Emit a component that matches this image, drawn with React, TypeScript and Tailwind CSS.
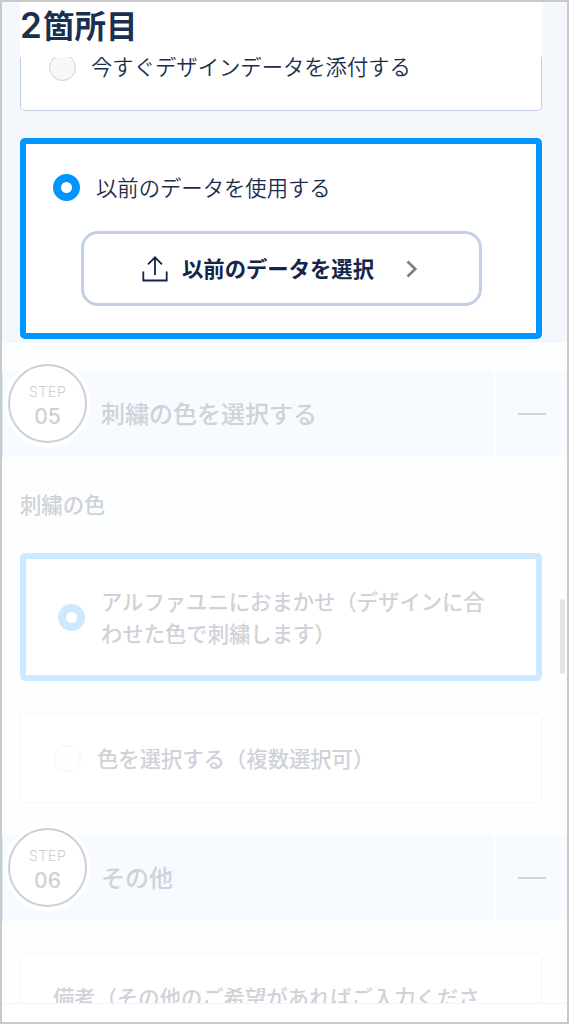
import type { ReactNode } from "react";

function Radio({ checked = false, faded = false }: { checked?: boolean; faded?: boolean }) {
  if (checked) {
    return (
      <span
        className={`block size-[27px] shrink-0 rounded-full border-[8.5px] bg-white ${
          faded ? "border-[#cce9ff]" : "border-[#0095ff]"
        }`}
      />
    );
  }
  return (
    <span
      className={`block size-[27px] shrink-0 rounded-full border ${
        faded ? "border-[#f3f5fb] bg-[#fefefe]" : "border-[#c3d0e7] bg-[#f8f8f8]"
      }`}
    />
  );
}

function UploadIcon() {
  return (
    <svg width="26" height="26" viewBox="0 0 26 26" fill="none" stroke="#14254a" strokeWidth="1.8">
      <path d="M1.3 15.5v9h23.4v-9" />
      <path d="M13 19V1.5M6 8.3l7-7 7 7" />
    </svg>
  );
}

function StepHeader({ step, title }: { step: string; title: string }) {
  return (
    <div className="flex h-[86px] shrink-0 gap-[2px]">
      <div className="flex w-[492px] border-l border-[#dcecf9] bg-[#f7fafe]">
        <div className="-mt-[11px] ml-[1px] flex size-[87px] shrink-0 items-center justify-center rounded-full bg-white">
          <div className="flex size-[79px] flex-col items-center rounded-full border-2 border-[#cdd0d8] pt-[17px] text-[#cdd0d8]">
            <span className="font-['Inter'] text-[14.5px] leading-[18px] font-light tracking-[0.3px]">STEP</span>
            <span className="mt-[3px] font-['Inter'] text-[21px] leading-[26px] font-medium">{step}</span>
          </div>
        </div>
        <h2 className="ml-[10px] text-[24px] leading-[84px] font-medium text-[#cfd2d9]">{title}</h2>
      </div>
      <div className="flex flex-1 items-center justify-center bg-[#f7fafe]">
        <span className="mr-[-1px] block h-[2px] w-[28px] bg-[#d2d4d9]" />
      </div>
    </div>
  );
}

function FadedCard({ className, children }: { className: string; children: ReactNode }) {
  return (
    <div className={`flex shrink-0 bg-white text-[21.33px] leading-[32px] font-medium text-[#cfd2d9] ${className}`}>
      {children}
    </div>
  );
}

export default function App() {
  return (
    <div className="relative flex h-[1024px] w-[569px] flex-col overflow-hidden border-2 border-[#c9c9c9] bg-[#fdfefe] font-['Noto_Sans_CJK_JP',sans-serif] whitespace-nowrap">
      <section className="flex h-[341px] shrink-0 flex-col bg-[#f4f8fc] pr-[25px] pl-[18px] text-[#1d2d4e]">
        <h1 className="flex h-[55px] shrink-0 bg-white text-[31.5px] leading-[44px] font-bold text-[#1b2f4f]">
          <span className="w-[23px] font-['Inter'] text-[35px] leading-[47px] font-semibold">2</span>
          箇所目
        </h1>
        <div className="flex h-[54px] shrink-0 items-start overflow-hidden rounded-b-[5px] border border-t-0 border-[#c3d0e7] bg-white pl-[28px]">
          <span className="-mt-[3px]">
            <Radio />
          </span>
          <span className="-mt-[7px] ml-[15px] text-[21.33px] leading-[32px] font-[350]">今すぐデザインデータを添付する</span>
        </div>
        <div className="mt-[27px] h-[201px] shrink-0 rounded-[5px] border-6 border-[#0095ff] bg-white">
          <div className="mt-[27px] flex h-[32px] items-center pl-[27px]">
            <Radio checked />
            <span className="ml-[16px] text-[21.33px] leading-[32px] font-[350]">以前のデータを使用する</span>
          </div>
          <button className="mt-[28px] ml-[55px] flex h-[75px] w-[401px] items-center rounded-[17px] border-3 border-[#c3d0e7] bg-white pl-[58px]">
            <UploadIcon />
            <span className="-mt-[2px] ml-[14px] text-[21.33px] leading-[32px] font-bold text-[#14254a]">以前のデータを選択</span>
            <svg
              className="ml-[32px]"
              width="12"
              height="18"
              viewBox="0 0 12 18"
              fill="none"
              stroke="#74808c"
              strokeWidth="2.6"
            >
              <path d="M1.5 1.5L9.3 9l-7.8 7.5" />
            </svg>
          </button>
        </div>
      </section>

      <section className="mt-[28px] flex shrink-0 flex-col">
        <StepHeader step="05" title="刺繍の色を選択する" />
        <h3 className="mt-[31px] ml-[18px] text-[21.33px] leading-[32px] font-medium text-[#cfd2d9]">刺繍の色</h3>
        <FadedCard className="mt-[33px] mr-[25px] ml-[18px] h-[128px] items-center rounded-[5px] border-6 border-[#cce9ff] pl-[32px]">
          <Radio checked faded />
          <p className="-mt-[1px] ml-[16px]">
            アルファユニにおまかせ（デザインに合
            <br />
            わせた色で刺繍します）
          </p>
        </FadedCard>
        <FadedCard className="mt-[32px] mr-[25px] ml-[18px] h-[90px] items-center rounded-[5px] border border-[#f3f5fb] pl-[33px]">
          <Radio faded />
          <span className="ml-[16px]">色を選択する（複数選択可）</span>
        </FadedCard>
      </section>

      <section className="mt-[32px] flex min-h-0 flex-1 flex-col overflow-visible">
        <StepHeader step="06" title="その他" />
        <div className="mt-[32px] mr-[25px] ml-[18px] flex min-h-0 flex-1 flex-col overflow-hidden">
          <FadedCard className="h-[120px] rounded-[5px] border border-[#f3f5fb] pt-[27px] pl-[32px]">
            備考（その他のご希望があればご入力くださ
          </FadedCard>
        </div>
      </section>

      <footer className="h-[19px] shrink-0 border-t border-[#f4f4f5] bg-white" />

      <div className="absolute top-[597px] right-[2px] h-[75px] w-[5px] rounded-full bg-[#e4e4e4]" />
    </div>
  );
}
